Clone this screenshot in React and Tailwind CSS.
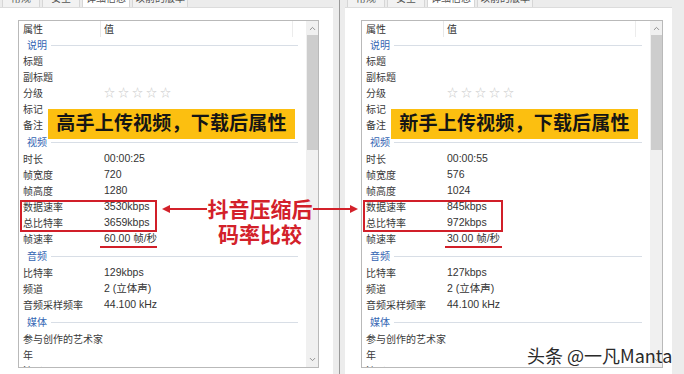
import { ChevronUp, ChevronDown } from 'lucide-react';

const FONT = "font-['Liberation_Sans','Noto_Sans_CJK_SC',sans-serif]";

const makeRows = (v) => [
    { s: '说明', first: true },
    { l: '标题' },
    { l: '副标题' },
    { l: '分级', stars: true },
    { l: '标记' },
    { l: '备注' },
    { s: '视频' },
    { l: '时长', v: v.duration },
    { l: '帧宽度', v: v.width },
    { l: '帧高度', v: v.height },
    { l: '数据速率', v: v.dataRate },
    { l: '总比特率', v: v.totalRate },
    { l: '帧速率', v: v.fps },
    { s: '音频' },
    { l: '比特率', v: v.audioRate },
    { l: '频道', v: '2 (立体声)' },
    { l: '音频采样频率', v: '44.100 kHz' },
    { s: '媒体' },
    { l: '参与创作的艺术家' },
    { l: '年' },
    { l: '流派' },
];

const Tabs = () => (
    <div className="h-[7px] flex items-end pl-[2px] overflow-hidden">
        {[
            { t: '常规', w: 'w-[38px]' },
            { t: '安全', w: 'w-[38px]' },
            { t: '详细信息', w: 'w-[48px]', on: true },
            { t: '以前的版本', w: 'w-[56px]' },
        ].map((tab) => (
            <div
                key={tab.t}
                className={`${tab.w} h-[7px] mr-[2px] border-x border-[#d6d6d6] flex justify-center overflow-hidden ${tab.on ? 'bg-white' : 'bg-[#f2f2f2]'}`}
            >
                <span className="text-[10px] leading-[12px] -mt-[7px] text-[#555]">{tab.t}</span>
            </div>
        ))}
    </div>
);

const Row = ({ row }) => {
    if (row.s) {
        return (
            <div className={`${row.first ? 'h-[16px]' : 'h-[18px]'} flex items-center pl-[8px] pr-[8px]`}>
                <span className="text-[10px] text-[#3465b3] mr-[4px]">{row.s}</span>
                <div className="flex-1 h-px bg-[#d8dee6]" />
            </div>
        );
    }
    return (
        <div className="h-[16px] flex items-center pl-[4px]">
            <div className="w-[81px] text-[10px] text-[#3a3a3a] whitespace-nowrap">{row.l}</div>
            {row.stars ? (
                <div className="flex gap-[3px] text-[11px] text-[#c9c9c9] leading-none">
                    <span>☆</span><span>☆</span><span>☆</span><span>☆</span><span>☆</span>
                </div>
            ) : (
                <div className="text-[10.5px] text-[#333] whitespace-nowrap">{row.v}</div>
            )}
        </div>
    );
};

const Window = ({ data, banner, boxW, lineL, className }) => (
    <div className={`flex flex-col ${className}`}>
        <Tabs />
        <div className="flex-1 bg-white border-t border-[#dcdcdc] pt-[12px]">
            <div className={`${data.listMargin} ${data.listW} h-[348px] border border-[#b9b9b9] flex`}>
                <div className="flex-1 relative overflow-hidden">
                    <div className="h-[16px] flex items-center pl-[4px] text-[10px] text-[#333]">
                        <div className="w-[77px]">属性</div>
                        <div className="w-px h-full bg-[#e8e8e8] mr-[3px]" />
                        <div className="w-[188px]">值</div>
                        <div className="w-px h-full bg-[#ececec]" />
                    </div>
                    {makeRows(data).map((r, i) => (
                        <Row key={i} row={r} />
                    ))}

                    <div className="absolute left-[29px] top-[88px] w-[247px] h-[30px] bg-[#fcbf10] flex items-center justify-center">
                        <span className="text-[19px] font-bold text-[#151515] tracking-[0.2px]">{banner}</span>
                    </div>

                    <div className={`absolute left-[1px] top-[179px] h-[32px] border-2 border-[#d11f29] ${boxW}`} />
                    <div className={`absolute top-[225px] w-[57px] h-[2px] bg-[#d11f29] ${lineL}`} />
                </div>
                <div className="w-[12px] bg-[#f0f0f0] flex flex-col items-center">
                    <ChevronUp size={9} strokeWidth={2.5} className="text-[#8a8a8a] mt-[3px]" />
                    <div className="w-[11px] h-[115px] bg-[#cdcdcd] mt-[2px]" />
                    <div className="flex-1" />
                    <ChevronDown size={9} strokeWidth={2.5} className="text-[#8a8a8a] mb-[3px]" />
                </div>
            </div>
        </div>
    </div>
);

const left = {
    duration: '00:00:25', width: '720', height: '1280',
    dataRate: '3530kbps', totalRate: '3659kbps', fps: '60.00 帧/秒', audioRate: '129kbps',
    listMargin: 'ml-[18px]', listW: 'w-[301px]',
};

const right = {
    duration: '00:00:55', width: '576', height: '1024',
    dataRate: '845kbps', totalRate: '972kbps', fps: '30.00 帧/秒', audioRate: '127kbps',
    listMargin: 'ml-[16px]', listW: 'w-[302px]',
};

export default function App() {
    return (
        <div className={`w-[684px] h-[374px] relative overflow-hidden bg-[#ececec] flex ${FONT}`}>
            <Window className="w-[333px]" data={left} banner="高手上传视频，下载后属性" boxW="w-[137px]" lineL="left-[81px]" />
            <div className="w-[12px] flex justify-center">
                <div className="w-px h-full bg-[#9a9a9a] ml-[1px]" />
            </div>
            <Window className="w-[327px]" data={right} banner="新手上传视频，下载后属性" boxW="w-[140px]" lineL="left-[83px]" />

            {/* annotation across both windows */}
            <div className="absolute left-[200px] top-[196px] w-[120px] flex flex-col items-center text-[#d3212a] font-bold font-['Noto_Sans_CJK_SC',sans-serif] text-[21px]">
                <div className="h-[25px] leading-[25px]">抖音压缩后</div>
                <div className="h-[25px] leading-[25px]">码率比较</div>
            </div>
            <svg className="absolute left-[160px] top-[202px]" width="202" height="14" viewBox="0 0 202 14">
                <line x1="8" y1="7" x2="47" y2="7" stroke="#d3212a" strokeWidth="2" />
                <polygon points="2,7 10,3 10,11" fill="#d3212a" />
                <line x1="153" y1="7" x2="192" y2="7" stroke="#d3212a" strokeWidth="2" />
                <polygon points="198,7 190,3 190,11" fill="#d3212a" />
            </svg>

            <div className="absolute left-[527px] top-[342px] text-[18px] text-[#2a2a2a] font-['Noto_Sans_CJK_SC',sans-serif] [text-shadow:0_0_2px_#fff] whitespace-nowrap">
                头条 @一凡Manta
            </div>
        </div>
    );
}
